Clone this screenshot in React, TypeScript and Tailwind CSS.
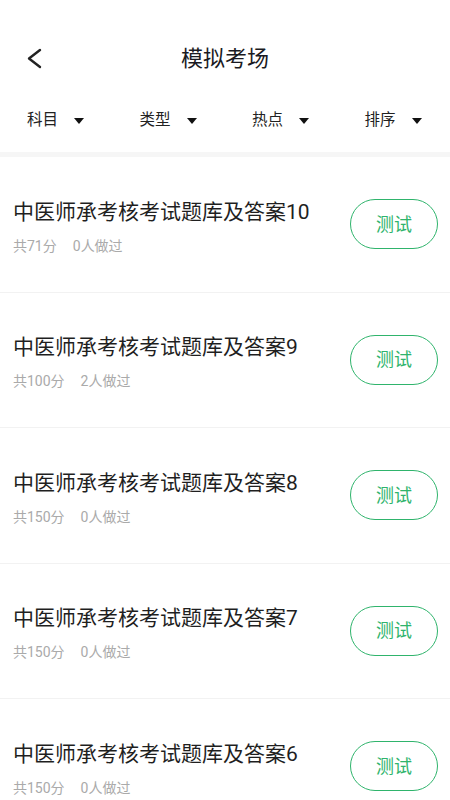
const FONT = { fontFamily: 'Roboto, "Noto Sans CJK SC", "Noto Sans", sans-serif' };

const FILTERS = ['科目', '类型', '热点', '排序'];

const ITEMS = [
    { name: '中医师承考核考试题库及答案10', score: 71, done: 0 },
    { name: '中医师承考核考试题库及答案9', score: 100, done: 2 },
    { name: '中医师承考核考试题库及答案8', score: 150, done: 0 },
    { name: '中医师承考核考试题库及答案7', score: 150, done: 0 },
    { name: '中医师承考核考试题库及答案6', score: 150, done: 0 },
];

export default function App() {
    return (
        <div className="w-[450px] h-[800px] overflow-hidden bg-white" style={FONT}>
            {/* Header */}
            <div className="relative h-[84px] flex items-start justify-center pt-[44px]">
                <svg className="absolute left-[24px] top-[46px]" width="22" height="26" viewBox="0 0 22 26" fill="none">
                    <polyline points="16,4 5,12.5 16,21" stroke="#222" strokeWidth="2.4" strokeLinecap="round" strokeLinejoin="round" />
                </svg>
                <span className="text-[22px] leading-[30px] text-[#1a1a22]">模拟考场</span>
            </div>

            {/* Filters */}
            <div className="grid grid-cols-4 h-[68px] items-center pt-[6px]">
                {FILTERS.map((f) => (
                    <div key={f} className="flex items-center pl-[27px]">
                        <span className="text-[15.5px] leading-none text-[#222]">{f}</span>
                        <span className="ml-[16px] w-0 h-0 border-l-[5.5px] border-r-[5.5px] border-t-[6px] border-l-transparent border-r-transparent border-t-[#111]" />
                    </div>
                ))}
            </div>
            <div className="h-[5px] bg-[#f6f6f6]" />

            {/* List */}
            <div className="flex flex-col">
                {ITEMS.map((item) => (
                    <div key={item.name} className="h-[135.5px] flex items-center justify-between pl-[13px] pr-[12px] border-b border-[#f2f2f2]">
                        <div className="flex flex-col pt-[5px]">
                            <span className="text-[21px] leading-[26px] text-[#1f1f1f]">{item.name}</span>
                            <div className="flex mt-[12px] text-[14px] leading-[18px] text-[#aaaaaa]">
                                <span>共{item.score}分</span>
                                <span className="ml-[16px]">{item.done}人做过</span>
                            </div>
                        </div>
                        <button className="w-[88px] h-[50px] rounded-full border-[1.5px] border-[#2fb46c] text-[#2fb46c] text-[18px] flex items-center justify-center">
                            测试
                        </button>
                    </div>
                ))}
            </div>
        </div>
    );
}
